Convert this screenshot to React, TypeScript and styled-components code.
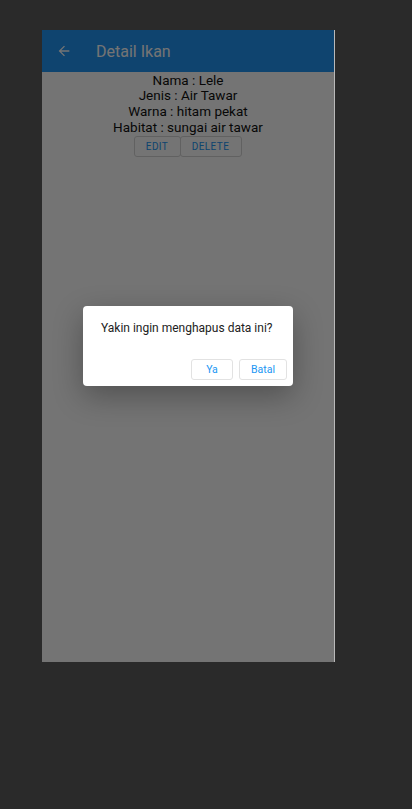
import React from "react";
import styled, { createGlobalStyle } from "styled-components";

const GlobalStyle = createGlobalStyle`
  html, body {
    margin: 0;
    padding: 0;
    background: #2a2a2a;
    font-family: Roboto, "Liberation Sans", sans-serif;
  }
`;

const Stage = styled.div`
  min-height: 809px;
  padding: 30px 0 0 42px;
  box-sizing: border-box;
`;

const Phone = styled.div`
  position: relative;
  width: 292px;
  height: 632px;
  background: #ffffff;
  border-right: 1px solid #b9b9b9;
  display: flex;
  flex-direction: column;
  overflow: hidden;
`;

const AppBar = styled.div`
  height: 42px;
  background: #2196f3;
  display: flex;
  align-items: center;
  padding-left: 14px;
  gap: 24px;
  color: #ffffff;
  flex-shrink: 0;
`;

const BackIcon = styled.svg`
  width: 16px;
  height: 16px;
  flex-shrink: 0;
`;

const Title = styled.span`
  font-size: 16px;
  font-weight: 400;
`;

const Content = styled.div`
  display: flex;
  flex-direction: column;
  align-items: center;
  color: #111;
  font-size: 13.5px;
  line-height: 15.8px;
  padding-top: 0.5px;
`;

const Line = styled.div`
  white-space: nowrap;
`;

const ButtonGroup = styled.div`
  display: flex;
`;

const OutlineButton = styled.button<{ $w: number }>`
  width: ${(p) => p.$w}px;
  height: 21px;
  margin: 0 0 0 -1px;
  padding: 0;
  background: transparent;
  border: 1px solid #d6d6d6;
  border-radius: 3px;
  color: #2196f3;
  font-family: Roboto, "Liberation Sans", sans-serif;
  font-size: 10px;
  letter-spacing: 0.4px;
  text-transform: uppercase;
  cursor: pointer;
`;

const Overlay = styled.div`
  position: absolute;
  inset: 0;
  background: rgba(0, 0, 0, 0.545);
  display: flex;
  align-items: center;
  justify-content: center;
`;

const Dialog = styled.div`
  width: 210px;
  height: 80px;
  box-sizing: border-box;
  background: #ffffff;
  border-radius: 4px;
  box-shadow: 0 10px 30px rgba(0, 0, 0, 0.3);
  display: flex;
  flex-direction: column;
  justify-content: space-between;
  padding: 15px 6px 6px 18px;
`;

const Message = styled.div`
  font-size: 12px;
  color: #222;
`;

const DialogActions = styled.div`
  display: flex;
  justify-content: flex-end;
  gap: 6px;
`;

const DialogButton = styled.button<{ $w: number }>`
  width: ${(p) => p.$w}px;
  height: 21px;
  padding: 0;
  background: #fff;
  border: 1px solid #e2e2e2;
  border-radius: 3px;
  color: #2196f3;
  font-family: Roboto, "Liberation Sans", sans-serif;
  font-size: 10.5px;
  cursor: pointer;
`;

const ikan = {
  nama: "Lele",
  jenis: "Air Tawar",
  warna: "hitam pekat",
  habitat: "sungai air tawar",
};

export default function App() {
  return (
    <>
      <GlobalStyle />
      <Stage>
        <Phone>
          <AppBar>
            <BackIcon viewBox="0 0 24 24">
              <path
                d="M20 11H7.83l5.59-5.59L12 4l-8 8 8 8 1.41-1.41L7.83 13H20v-2z"
                fill="#ffffff"
              />
            </BackIcon>
            <Title>Detail Ikan</Title>
          </AppBar>
          <Content>
            <Line>Nama : {ikan.nama}</Line>
            <Line>Jenis : {ikan.jenis}</Line>
            <Line>Warna : {ikan.warna}</Line>
            <Line>Habitat : {ikan.habitat}</Line>
            <ButtonGroup>
              <OutlineButton $w={47}>Edit</OutlineButton>
              <OutlineButton $w={62}>Delete</OutlineButton>
            </ButtonGroup>
          </Content>
          <Overlay>
            <Dialog>
              <Message>Yakin ingin menghapus data ini?</Message>
              <DialogActions>
                <DialogButton $w={42}>Ya</DialogButton>
                <DialogButton $w={48}>Batal</DialogButton>
              </DialogActions>
            </Dialog>
          </Overlay>
        </Phone>
      </Stage>
    </>
  );
}
